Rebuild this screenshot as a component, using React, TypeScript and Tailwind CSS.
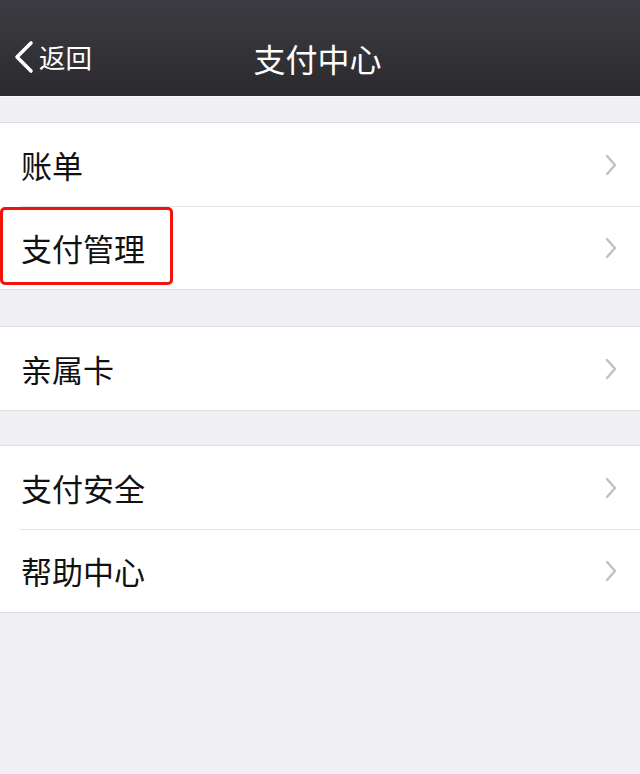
import React from "react";

const font = { fontFamily: '"Noto Sans CJK SC", "Noto Sans", sans-serif' };

function Chevron() {
  return (
    <svg width="14" height="24" viewBox="0 0 14 24" className="shrink-0">
      <path d="M3 3 L11 12 L3 21" fill="none" stroke="#c2c2c6" strokeWidth="2.5" strokeLinecap="round" strokeLinejoin="round" />
    </svg>
  );
}

function Row({ label, divider, highlight }: { label: string; divider?: boolean; highlight?: boolean }) {
  return (
    <div className="relative">
      {divider && <div className="absolute left-[20px] right-0 top-0 h-px bg-[#e3e3e6]" />}
      <div className="flex h-[83px] items-center justify-between pl-[21px] pr-[22px]">
        <span className="text-[31px] leading-none text-[#111]">{label}</span>
        <Chevron />
      </div>
      {highlight && (
        <div className="pointer-events-none absolute left-0 top-[1px] h-[78px] w-[173px] rounded-[5px] border-[3px] border-[#f2120c]" />
      )}
    </div>
  );
}

function Section({ children }: { children: React.ReactNode }) {
  return <div className="border-y border-[#dedee2] bg-white">{children}</div>;
}

export default function App() {
  return (
    <div className="flex h-[774px] w-[640px] flex-col bg-[#efeff4]" style={font}>
      <div className="relative flex h-[96px] items-center justify-center bg-gradient-to-b from-[#3d3c42] to-[#2a2a2e] pt-[20px]">
        <div className="absolute left-[12px] top-[40px] flex items-center">
          <svg width="24" height="34" viewBox="0 0 24 34">
            <path d="M19 3 L5 17 L19 31" fill="none" stroke="#ffffff" strokeWidth="3.6" strokeLinecap="round" strokeLinejoin="round" />
          </svg>
          <span className="ml-[3px] text-[26.5px] leading-none text-white">返回</span>
        </div>
        <span className="-ml-[5px] text-[32px] leading-none text-white">支付中心</span>
      </div>
      <div className="h-px bg-[#f8f8fa]" />
      <div className="h-[25px]" />
      <Section>
        <Row label="账单" />
        <Row label="支付管理" divider highlight />
      </Section>
      <div className="h-[36px]" />
      <Section>
        <Row label="亲属卡" />
      </Section>
      <div className="h-[34px]" />
      <Section>
        <Row label="支付安全" />
        <Row label="帮助中心" divider />
      </Section>
    </div>
  );
}
